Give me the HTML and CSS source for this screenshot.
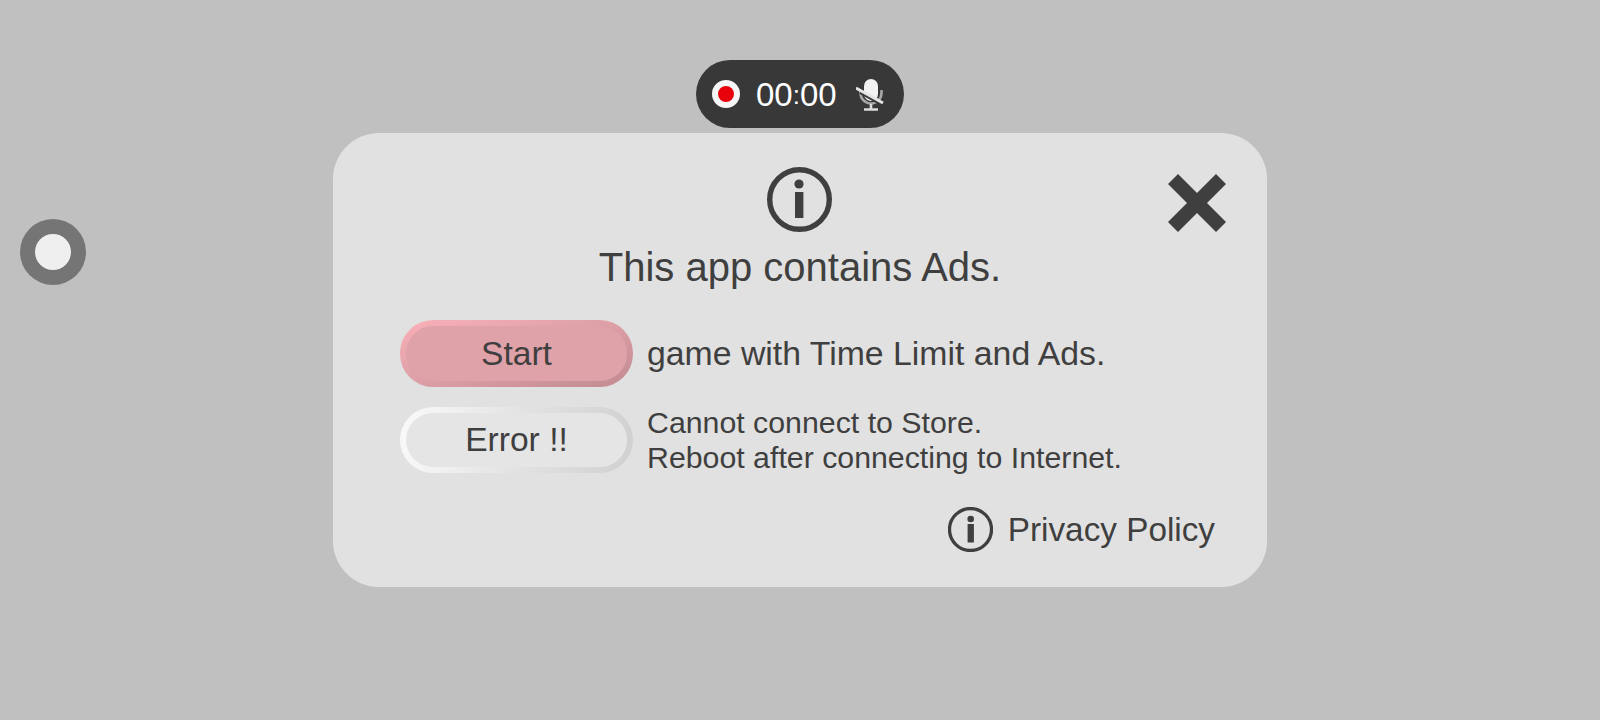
FILE: index.html
```html
<!DOCTYPE html>
<html lang="en">

<head>
  <meta charset="UTF-8">
  <meta name="viewport" content="width=device-width, initial-scale=1.0">
  <title>This app contains Ads</title>
  <link rel="stylesheet" href="styles.css">
</head>

<body>
  <div class="float-btn"><span class="float-dot"></span></div>

  <div class="recbar">
    <span class="rec-dot"></span>
    <span class="rec-time">00<span class="rec-colon">:</span>00</span>
    <svg class="rec-mic" viewBox="0 0 30 34" width="30" height="34">
      <rect x="8" y="1" width="14" height="22" rx="7" fill="#f2f2f2" />
      <path d="M4.5 13v2a10.500 10.500 0 0 0 21 0v-3" fill="none" stroke="#a8a8a8" stroke-width="2.6" />
      <path d="M15 26v5M8 31.500h14" fill="none" stroke="#dcdcdc" stroke-width="2.6" />
      <path d="M4 14.500l20 11" stroke="#383838" stroke-width="3" />
      <path d="M0 10l27 15" stroke="#e4e4e4" stroke-width="3" />
    </svg>
  </div>

  <div class="panel">
    <svg class="info-big" viewBox="0 0 65 65" width="65" height="65">
      <circle cx="32.5" cy="32.5" r="29.8" fill="none" stroke="#3f3f3f" stroke-width="5.4" />
      <circle cx="32" cy="17" r="4.6" fill="#3f3f3f" />
      <rect x="28" y="25" width="8.4" height="26" fill="#3f3f3f" />
    </svg>
    <button class="close">
      <svg viewBox="0 0 58 58" width="58" height="58">
        <path d="M10 0L29 19L48 0L58 10L39 29L58 48L48 58L29 39L10 58L0 48L19 29L0 10Z" fill="#3f3f3f" />
      </svg>
    </button>
    <h1 class="title">This app contains Ads.</h1>

    <div class="rows">
      <div class="row">
        <div class="pill pill-start"><span class="pill-in">Start</span></div>
        <p class="row-text">game with Time Limit and Ads.</p>
      </div>
      <div class="row">
        <div class="pill pill-error"><span class="pill-in">Error !!</span></div>
        <p class="row-text small">Cannot connect to Store.<br>Reboot after connecting to Internet.</p>
      </div>
    </div>

    <div class="privacy">
      <svg viewBox="0 0 45 45" width="45" height="45">
        <circle cx="22.5" cy="22.5" r="21" fill="none" stroke="#3f3f3f" stroke-width="3.3" />
        <circle cx="22.7" cy="12" r="3.3" fill="#3f3f3f" />
        <rect x="19.6" y="17" width="6.3" height="18.5" fill="#3f3f3f" />
      </svg>
      <span>Privacy Policy</span>
    </div>
  </div>
</body>

</html>
```

FILE: styles.css
```css
* {
  box-sizing: border-box;
}

html,
body {
  height: 100%;
}

body {
  margin: 0;
  padding-top: 60px;
  display: flex;
  flex-direction: column;
  align-items: center;
  background: #c0c0c0;
  color: #3f3f3f;
  font-family: "Liberation Sans", Arial, sans-serif;
  overflow: hidden;
}

.float-btn {
  position: absolute;
  left: 20px;
  top: 219px;
  width: 66px;
  height: 66px;
  display: flex;
  align-items: center;
  justify-content: center;
  background: #757575;
  border-radius: 50%;
}

.float-dot {
  width: 36px;
  height: 36px;
  background: #efefef;
  border-radius: 50%;
}

.recbar {
  width: 208px;
  height: 68px;
  display: flex;
  align-items: center;
  padding-left: 16px;
  background: #383838;
  border-radius: 34px;
  color: #fff;
}

.rec-dot {
  width: 28px;
  height: 28px;
  background: #e8000a;
  border: 6px solid #f6f6f6;
  border-radius: 50%;
}

.rec-time {
  margin: 2px 0 0 16px;
  font-size: 33px;
}

.rec-colon {
  font-size: 26px;
  vertical-align: 2px;
}

.rec-mic {
  margin: 2px 0 0 19px;
}

.panel {
  position: relative;
  width: 934px;
  height: 454px;
  margin-top: 5px;
  padding-top: 34px;
  display: flex;
  flex-direction: column;
  align-items: center;
  background: #e1e1e1;
  border-radius: 46px;
}

.info-big {
  display: block;
  margin-right: 2px;
}

.close {
  position: absolute;
  top: 41px;
  right: 41px;
  padding: 0;
  border: none;
  background: none;
  line-height: 0;
}

.title {
  margin: 10px 0 0;
  font-size: 40px;
  font-weight: normal;
  line-height: 50px;
}

.rows {
  align-self: flex-start;
  margin: 28px 0 0 67px;
  display: flex;
  flex-direction: column;
  gap: 18px;
}

.row {
  display: flex;
  align-items: center;
  gap: 14px;
}

.row-text {
  margin: 0;
  font-size: 33.8px;
}

.row-text.small {
  font-size: 30.3px;
  line-height: 35px;
}

.pill {
  width: 233px;
  height: 66px;
  padding: 6px;
  border-radius: 33px;
}

.pill-in {
  display: flex;
  align-items: center;
  justify-content: center;
  height: 100%;
  border-radius: 27px;
  font-size: 33.6px;
}

.pill-start {
  height: 67px;
  background: linear-gradient(to bottom right, #fbb0b8 0%, #e0a2a9 42%, #c28a91 100%);
}

.pill-start .pill-in {
  background: #dfa2a9;
}

.pill-error {
  background: linear-gradient(100deg, #fafafa 0%, #e3e3e3 50%, #d0d0d0 100%);
}

.pill-error .pill-in {
  background: #e5e5e5;
}

.privacy {
  position: absolute;
  right: 52px;
  top: 374px;
  display: flex;
  align-items: center;
  gap: 15px;
  font-size: 33.3px;
}
```
